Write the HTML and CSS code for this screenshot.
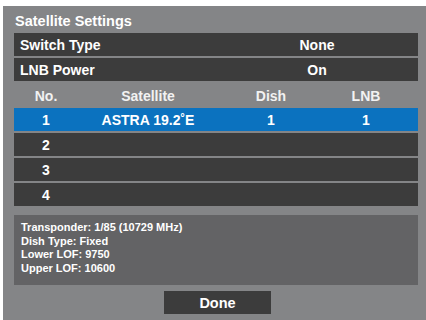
FILE: index.html
```html
<!DOCTYPE html>
<html>
<head>
<meta charset="utf-8">
<link rel="stylesheet" href="styles.css">
</head>
<body>
<div class="panel">
  <div class="title">Satellite Settings</div>
  <div class="setting"><span class="label">Switch Type</span><span class="value">None</span></div>
  <div class="setting"><span class="label">LNB Power</span><span class="value">On</span></div>
  <div class="grid head"><span>No.</span><span>Satellite</span><span>Dish</span><span>LNB</span></div>
  <div class="grid row selected"><span>1</span><span>ASTRA 19.2˚E</span><span>1</span><span>1</span></div>
  <div class="grid row"><span>2</span><span></span><span></span><span></span></div>
  <div class="grid row"><span>3</span><span></span><span></span><span></span></div>
  <div class="grid row"><span>4</span><span></span><span></span><span></span></div>
  <div class="info">
    <div>Transponder: 1/85 (10729 MHz)</div>
    <div>Dish Type: Fixed</div>
    <div>Lower LOF: 9750</div>
    <div>Upper LOF: 10600</div>
  </div>
  <div class="actions"><div class="done">Done</div></div>
</div>
</body>
</html>
```
FILE: styles.css
```css
html, body { margin: 0; background: #ffffff; }
body {
  padding: 6px 0 0 3px;
  width: 426px;
  height: 320px;
  box-sizing: border-box;
  overflow: hidden;
  font-family: "Liberation Sans", Arial, sans-serif;
  font-weight: bold;
  color: #ffffff;
}
.panel {
  background: #848587;
  height: 314px;
  padding: 0 8px 0 11px;
  display: flex;
  flex-direction: column;
}
.title {
  height: 27px;
  line-height: 30px;
  font-size: 14.5px;
  padding-left: 1px;
  box-sizing: border-box;
}
.setting {
  height: 23px;
  background: #3c3c3c;
  display: grid;
  grid-template-columns: 1fr 180px;
  align-items: center;
  font-size: 14px;
  margin-bottom: 2px;
}
.setting .label { padding-left: 6px; }
.setting .value { text-align: center; padding-right: 22px; }
.grid {
  display: grid;
  grid-template-columns: 64px 140px 106px 84px 1fr;
  align-items: center;
  font-size: 14px;
  text-align: center;
}
.head {
  height: 25px;
  margin-top: -2px;
  padding-top: 2px;
  color: #f2f2f2;
}
.row {
  height: 23px;
  background: #3c3c3c;
  margin-bottom: 2px;
}
.row.selected { background: #0b72bf; }
.info {
  margin-top: 7px;
  height: 70px;
  background: #636365;
  font-size: 11px;
  line-height: 13.7px;
  padding: 6px 7px 0;
  box-sizing: border-box;
}
.actions {
  display: flex;
  justify-content: center;
  margin-top: 6px;
  padding-left: 3px;
}
.done {
  width: 107px;
  height: 23px;
  background: #3c3c3c;
  font-size: 14.5px;
  line-height: 24px;
  text-align: center;
}
```
